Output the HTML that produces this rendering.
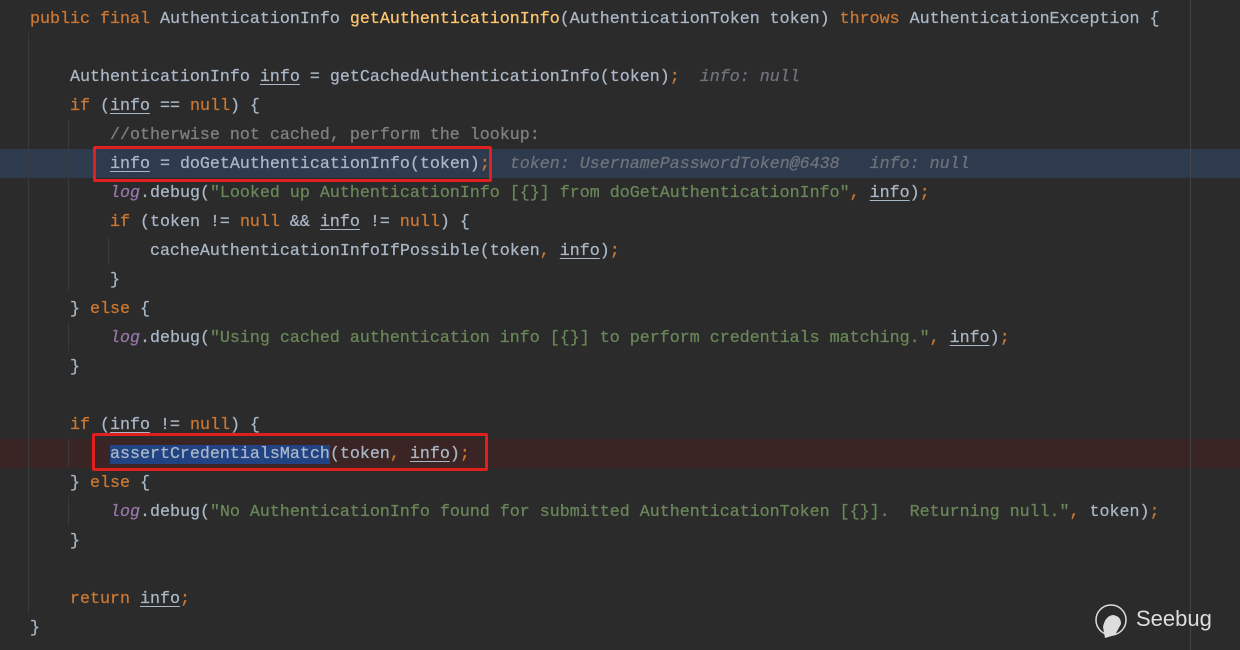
<!DOCTYPE html>
<html><head><style>
body{margin:0;width:1240px;height:650px;background:#2b2b2b;overflow:hidden;position:relative;font-family:"Liberation Mono",monospace;font-size:16.67px;color:#a9b7c6}
.l{position:absolute;left:30px;height:29px;line-height:29px;white-space:pre;width:1210px;margin-top:1px;-webkit-text-stroke:0.25px}
.k{color:#cc7832}.m{color:#ffc66d}.s{color:#6a8759}.c{color:#808080}.g{color:#9876aa;font-style:italic}.h{color:#6f737a;font-style:italic}
u{text-decoration:underline;text-underline-offset:3px}
.bg{position:absolute;left:0;width:1240px;height:29px}
.box{position:absolute;border:3px solid #e0201f;border-radius:2px}
.v{position:absolute;width:1px;background:#3a3a3a}
</style></head><body>
<div class="bg" style="top:149px;background:#2e3b4e"></div>
<div class="bg" style="top:439px;background:#3a2424"></div>
<div class="v" style="left:28px;top:33px;height:580px"></div>
<div class="v" style="left:68px;top:120px;height:172px"></div>
<div class="v" style="left:68px;top:323px;height:28px"></div>
<div class="v" style="left:68px;top:439px;height:28px"></div>
<div class="v" style="left:68px;top:497px;height:28px"></div>
<div class="v" style="left:108px;top:236px;height:28px"></div>
<div class="v" style="left:1190px;top:0;height:650px;background:#444"></div>
<div class="l" style="top:4px"><span class="k">public final </span>AuthenticationInfo <span class="m">getAuthenticationInfo</span>(AuthenticationToken token) <span class="k">throws </span>AuthenticationException {</div>
<div class="l" style="top:62px">    AuthenticationInfo <u>info</u> = getCachedAuthenticationInfo(token)<span class="k">;</span>  <span class="h">info: null</span></div>
<div class="l" style="top:91px">    <span class="k">if </span>(<u>info</u> == <span class="k">null</span>) {</div>
<div class="l" style="top:120px">        <span class="c">//otherwise not cached, perform the lookup:</span></div>
<div class="l" style="top:149px">        <u>info</u> = doGetAuthenticationInfo(token)<span class="k">;</span>  <span class="h">token: UsernamePasswordToken@6438   info: null</span></div>
<div class="l" style="top:178px">        <span class="g">log</span>.debug(<span class="s">"Looked up AuthenticationInfo [{}] from doGetAuthenticationInfo"</span><span class="k">, </span><u>info</u>)<span class="k">;</span></div>
<div class="l" style="top:207px">        <span class="k">if </span>(token != <span class="k">null </span>&amp;&amp; <u>info</u> != <span class="k">null</span>) {</div>
<div class="l" style="top:236px">            cacheAuthenticationInfoIfPossible(token<span class="k">, </span><u>info</u>)<span class="k">;</span></div>
<div class="l" style="top:265px">        }</div>
<div class="l" style="top:294px">    } <span class="k">else </span>{</div>
<div class="l" style="top:323px">        <span class="g">log</span>.debug(<span class="s">"Using cached authentication info [{}] to perform credentials matching."</span><span class="k">, </span><u>info</u>)<span class="k">;</span></div>
<div class="l" style="top:352px">    }</div>
<div class="l" style="top:410px">    <span class="k">if </span>(<u>info</u> != <span class="k">null</span>) {</div>
<div class="l" style="top:439px">        <span style="background:#214283">assertCredentialsMatch</span>(token<span class="k">, </span><u>info</u>)<span class="k">;</span></div>
<div class="l" style="top:468px">    } <span class="k">else </span>{</div>
<div class="l" style="top:497px">        <span class="g">log</span>.debug(<span class="s">"No AuthenticationInfo found for submitted AuthenticationToken [{}].  Returning null."</span><span class="k">, </span>token)<span class="k">;</span></div>
<div class="l" style="top:526px">    }</div>
<div class="l" style="top:584px">    <span class="k">return </span><u>info</u><span class="k">;</span></div>
<div class="l" style="top:613px">}</div>
<div class="box" style="left:93px;top:146px;width:393px;height:30px"></div>
<div class="box" style="left:92px;top:433px;width:390px;height:32px"></div>
<svg style="position:absolute;left:1093px;top:602px" width="40" height="40" viewBox="0 0 40 40"><circle cx="18" cy="18" r="15" fill="none" stroke="#ddd" stroke-width="1.5"/><path d="M12 36 L10 25 Q12 14 20 13 Q28 14 28 22 L22 33 Z" fill="#ddd"/></svg>
<div style="position:absolute;left:1136px;top:606px;font-family:'Liberation Sans',sans-serif;font-size:22px;color:#ddd">Seebug</div>
</body></html>
